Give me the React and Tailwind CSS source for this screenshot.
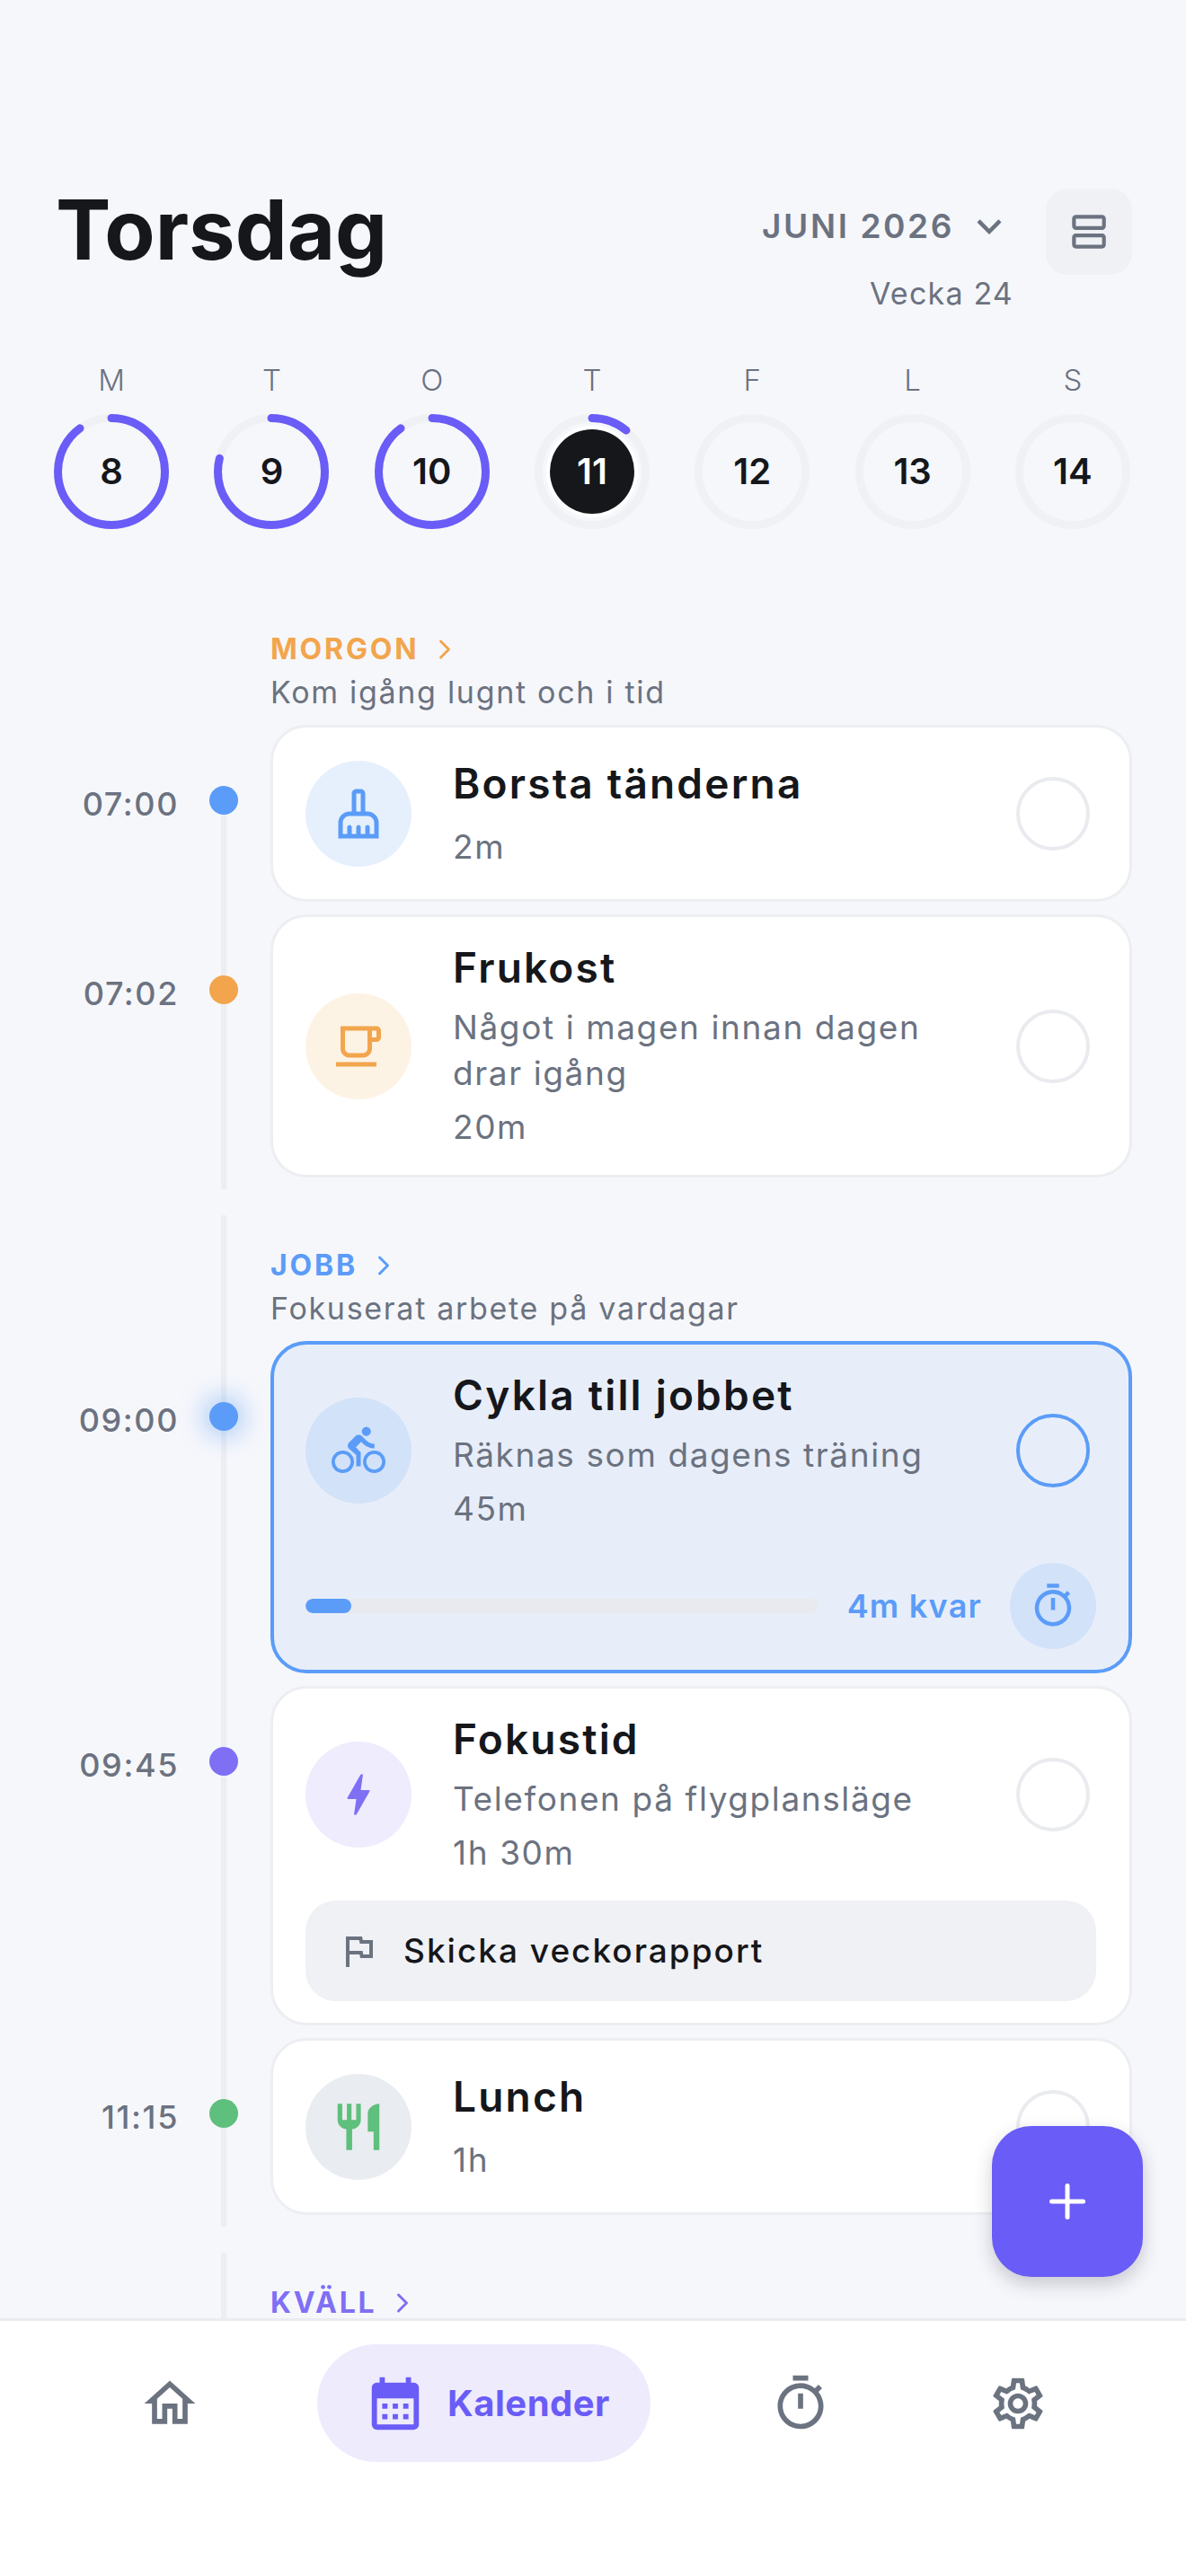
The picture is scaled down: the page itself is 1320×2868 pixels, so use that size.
import {
  MdBolt,
  MdCalendarMonth,
  MdDirectionsBike,
  MdKeyboardArrowDown,
  MdOutlineCleaningServices,
  MdOutlineFlag,
  MdOutlineHome,
  MdOutlineLocalCafe,
  MdOutlineSettings,
  MdOutlineTimer,
  MdOutlineViewAgenda,
  MdRestaurant,
} from "react-icons/md";
import { ChevronRight, Plus } from "lucide-react";

const days = [
  { letter: "M", num: 8, progress: 90 },
  { letter: "T", num: 9, progress: 79 },
  { letter: "O", num: 10, progress: 90 },
  { letter: "T", num: 11, progress: 11, today: true },
  { letter: "F", num: 12, progress: 0 },
  { letter: "L", num: 13, progress: 0 },
  { letter: "S", num: 14, progress: 0 },
];

function DayRing({ letter, num, progress, today }) {
  return (
    <div className="flex flex-col items-center">
      <span className="h-[44px] text-[33px] leading-[44px] font-light text-[#6b7280]">{letter}</span>
      <div className="relative mt-[16px] h-[128px] w-[128px]">
        <svg width="128" height="128" viewBox="0 0 128 128" className="-rotate-90">
          <circle cx="64" cy="64" r="59.5" fill="none" stroke="#f0f1f5" strokeWidth="9" />
          {progress > 0 && (
            <circle
              cx="64"
              cy="64"
              r="59.5"
              fill="none"
              stroke="#6a5cf6"
              strokeWidth="9"
              strokeLinecap="round"
              pathLength="100"
              strokeDasharray={`${progress} 100`}
            />
          )}
        </svg>
        <div className="absolute inset-0 flex items-center justify-center">
          {today ? (
            <div className="flex h-[102px] w-[102px] items-center justify-center rounded-full bg-white">
              <div className="flex h-[94px] w-[94px] items-center justify-center rounded-full bg-[#15171b] text-[40px] font-semibold text-white">
                {num}
              </div>
            </div>
          ) : (
            <span className="text-[40px] font-semibold text-[#15171b]">{num}</span>
          )}
        </div>
      </div>
    </div>
  );
}

function SectionHead({ title, sub, color }) {
  return (
    <div className="mb-[16px] pl-[301px] pt-[38px]">
      <div className={`flex h-[36px] items-center text-[32px] leading-[36px] font-bold tracking-[2.8px] ${color}`}>
        <span>{title}</span>
        <ChevronRight size={36} strokeWidth={2} className="ml-[11px]" />
      </div>
      {sub && <p className="mt-[10px] text-[34px] leading-[40px] tracking-[1.7px] text-[#6b7280]">{sub}</p>}
    </div>
  );
}

function Row({ time, dot, children }) {
  return (
    <div className="flex items-start">
      <span className="w-[199px] pt-[66px] text-right text-[36px] leading-[44px] font-medium tracking-[1.6px] text-[#6b7280]">
        {time}
      </span>
      <div className="relative z-10 ml-[34px] pt-[68px]">
        <div className={`h-[32px] w-[32px] rounded-full ${dot}`} />
      </div>
      <div className="ml-[36px] w-[959px]">{children}</div>
    </div>
  );
}

function TaskBody({ icon, iconBg, title, desc, duration, check = "border-[#e9ebef]" }) {
  return (
    <div className="flex min-h-[135px] items-center">
      <div className={`flex h-[118px] w-[118px] shrink-0 items-center justify-center rounded-full ${iconBg}`}>
        {icon}
      </div>
      <div className="ml-[46px] min-w-0 flex-1">
        <h3 className="h-[56px] text-[46px] leading-[56px] font-semibold tracking-[2.2px] text-[#15171b]">{title}</h3>
        {desc && <p className="mt-[13px] text-[37px] leading-[51px] tracking-[1.6px] text-[#6b7280]">{desc}</p>}
        <p className={`${desc ? "mt-[10px]" : "mt-[18px]"} text-[37px] leading-[50px] tracking-[1.6px] text-[#6b7280]`}>
          {duration}
        </p>
      </div>
      <div className={`ml-[45px] mr-[7px] h-[82px] w-[82px] shrink-0 rounded-full border-[4px] ${check}`} />
    </div>
  );
}

function Card({ children, className = "pb-[28px]" }) {
  return (
    <div className={`rounded-[40px] border-[3px] border-[#eceef2] bg-white pl-[36px] pr-[37px] pt-[28px] ${className}`}>
      {children}
    </div>
  );
}

function NavIcon({ className, children }) {
  return (
    <button className={`flex h-[131px] w-[131px] items-center justify-center text-[#6b7280] ${className}`}>
      {children}
    </button>
  );
}

export default function App() {
  return (
    <div className="relative flex h-[2868px] w-[1320px] flex-col overflow-hidden bg-[#f6f7fb] [font-family:Inter,sans-serif]">
      <main className="min-h-0 flex-1 overflow-hidden">
        <header className="flex items-start pl-[62px] pr-[60px] pt-[210px]">
          <h1 className="flex-1 text-[92px] leading-[92px] font-bold text-[#15171b]">Torsdag</h1>
          <div className="flex flex-col items-end">
            <div className="flex h-[84px] items-center text-[37px] font-semibold tracking-[2.6px] text-[#6b7280]">
              JUNI 2026
              <MdKeyboardArrowDown size={54} className="ml-[12px]" />
            </div>
            <span className="mt-[11px] text-[34px] leading-[44px] tracking-[1.2px] text-[#6b7280]">Vecka 24</span>
          </div>
          <button className="ml-[36px] flex h-[96px] w-[96px] items-center justify-center rounded-[24px] bg-[#f0f1f5] text-[#6b7280]">
            <MdOutlineViewAgenda size={50} />
          </button>
        </header>

        <div className="mt-[52px] grid grid-cols-7 pl-[35px] pr-[37px]">
          {days.map((d) => (
            <DayRing key={d.num} {...d} />
          ))}
        </div>

        <div className="mt-[78px] flex flex-col gap-[29px]">
          <section className="relative flex flex-col pb-[13px]">
            <div className="absolute bottom-0 left-[246px] top-[225px] w-[6px] bg-[#eceef2]" />
            <SectionHead title="MORGON" sub="Kom igång lugnt och i tid" color="text-[#f2a54c]" />
            <div className="flex flex-col gap-[14px]">
              <Row time="07:00" dot="bg-[#5b9cf8]">
                <Card>
                  <TaskBody
                    icon={<MdOutlineCleaningServices size={60} className="text-[#5b9cf8]" />}
                    iconBg="bg-[#e6f0fd]"
                    title="Borsta tänderna"
                    duration="2m"
                  />
                </Card>
              </Row>
              <Row time="07:02" dot="bg-[#f2a54c]">
                <Card>
                  <TaskBody
                    icon={<MdOutlineLocalCafe size={60} className="text-[#f2a54c]" />}
                    iconBg="bg-[#fdf3e5]"
                    title="Frukost"
                    desc="Något i magen innan dagen drar igång"
                    duration="20m"
                  />
                </Card>
              </Row>
            </div>
          </section>

          <section className="relative flex flex-col pb-[13px]">
            <div className="absolute bottom-0 left-[246px] top-0 w-[6px] bg-[#eceef2]" />
            <SectionHead title="JOBB" sub="Fokuserat arbete på vardagar" color="text-[#5b9cf8]" />
            <div className="flex flex-col gap-[14px]">
              <Row time="09:00" dot="bg-[#5b9cf8] shadow-[0_0_26px_8px_rgba(91,156,248,0.4)]">
                <div className="rounded-[40px] border-[4px] border-[#5b9cf8] bg-[#e8eef9] pb-[23px] pl-[35px] pr-[36px] pt-[28px]">
                  <TaskBody
                    icon={<MdDirectionsBike size={60} className="text-[#5b9cf8]" />}
                    iconBg="bg-[#d2e2f9]"
                    title="Cykla till jobbet"
                    desc="Räknas som dagens träning"
                    duration="45m"
                    check="border-[#5b9cf8]"
                  />
                  <div className="mt-[35px] flex items-center">
                    <div className="h-[16px] flex-1 overflow-hidden rounded-full bg-[#e8eaef]">
                      <div className="h-full w-[51px] rounded-full bg-[#5b9cf8]" />
                    </div>
                    <span className="ml-[32px] text-[36px] font-semibold tracking-[1.2px] text-[#5b9cf8]">4m kvar</span>
                    <div className="ml-[31px] flex h-[96px] w-[96px] items-center justify-center rounded-full bg-[#d2e2f9]">
                      <MdOutlineTimer size={54} className="text-[#5b9cf8]" />
                    </div>
                  </div>
                </div>
              </Row>
              <Row time="09:45" dot="bg-[#7f6ff5]">
                <Card className="pb-[24px]">
                  <TaskBody
                    icon={<MdBolt size={60} className="text-[#7f6ff5]" />}
                    iconBg="bg-[#efecfe]"
                    title="Fokustid"
                    desc="Telefonen på flygplansläge"
                    duration="1h 30m"
                  />
                  <div className="mt-[28px] flex h-[112px] items-center rounded-[34px] bg-[#f0f1f5] pl-[35px]">
                    <MdOutlineFlag size={48} className="text-[#6b7280]" />
                    <span className="ml-[26px] text-[37px] font-medium tracking-[2px] text-[#15171b]">
                      Skicka veckorapport
                    </span>
                  </div>
                </Card>
              </Row>
              <Row time="11:15" dot="bg-[#5fbf7c]">
                <Card>
                  <TaskBody
                    icon={<MdRestaurant size={62} className="text-[#5fbf7c]" />}
                    iconBg="bg-[#e9ecf0]"
                    title="Lunch"
                    duration="1h"
                  />
                </Card>
              </Row>
            </div>
          </section>

          <section className="relative flex min-h-[200px] flex-col pb-[13px]">
            <div className="absolute bottom-0 left-[246px] top-0 w-[6px] bg-[#eceef2]" />
            <SectionHead title="KVÄLL" color="text-[#7f6ff5]" />
          </section>
        </div>
      </main>

      <button className="absolute bottom-[333px] right-[48px] z-20 flex h-[168px] w-[168px] items-center justify-center rounded-[44px] bg-[#6a5cf6] text-white shadow-[0_8px_20px_rgba(30,30,60,0.22)]">
        <Plus size={60} strokeWidth={2} />
      </button>

      <nav className="relative z-10 h-[287px] shrink-0 border-t-[3px] border-[#e9ebf0] bg-white pt-[26px]">
        <div className="flex items-center pl-[123px]">
          <NavIcon>
            <MdOutlineHome size={68} />
          </NavIcon>
          <div className="ml-[99px] flex h-[131px] w-[371px] items-center rounded-full bg-[#eeebfd] pl-[52px] text-[#6a5cf6]">
            <MdCalendarMonth size={70} />
            <span className="ml-[23px] text-[40px] font-bold tracking-[0.5px]">Kalender</span>
          </div>
          <NavIcon className="ml-[101px]">
            <MdOutlineTimer size={68} />
          </NavIcon>
          <NavIcon className="ml-[111px]">
            <MdOutlineSettings size={68} />
          </NavIcon>
        </div>
      </nav>
    </div>
  );
}
